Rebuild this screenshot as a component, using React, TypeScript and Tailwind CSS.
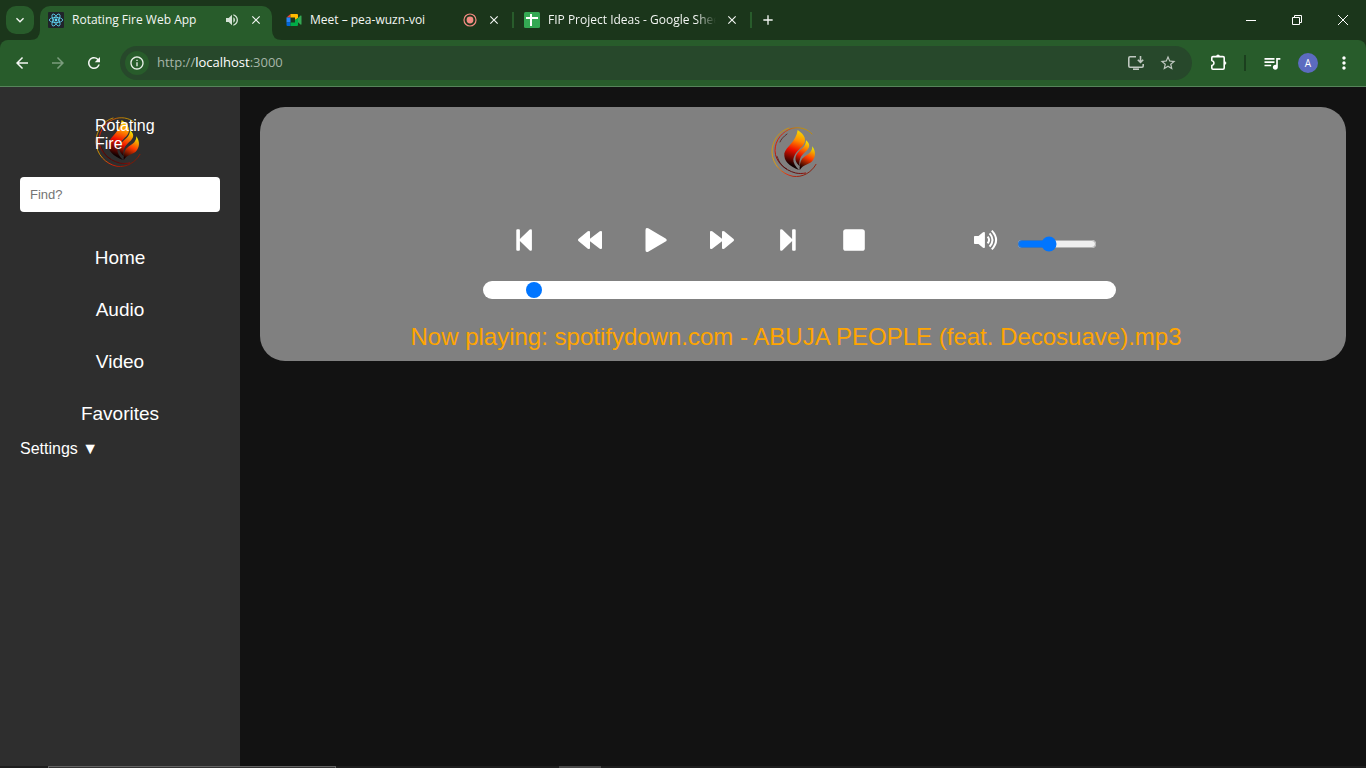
import { useState, type ReactNode } from 'react';
import {
  MdArrowBack,
  MdArrowForward,
  MdClose,
  MdAdd,
  MdExpandMore,
  MdInfoOutline,
  MdMoreVert,
  MdQueueMusic,
  MdRefresh,
  MdStarOutline,
  MdVolumeUp,
} from 'react-icons/md';

function FireLogo({ id }: { id: string }) {
  return (
    <svg viewBox="96 51 150 150" className="size-[50px] shrink-0" role="img" aria-label="Rotating Fire logo">
      <defs>
        <linearGradient id={`${id}-flame`} gradientUnits="userSpaceOnUse" x1="192" y1="66" x2="158" y2="168">
          <stop offset="0" stopColor="#f5d800" />
          <stop offset="0.28" stopColor="#ff8a00" />
          <stop offset="0.55" stopColor="#f01000" />
          <stop offset="0.98" stopColor="#100000" />
        </linearGradient>
        <linearGradient id={`${id}-middle`} gradientUnits="userSpaceOnUse" x1="208" y1="94" x2="176" y2="166">
          <stop offset="0" stopColor="#f2f000" />
          <stop offset="0.3" stopColor="#ff8000" />
          <stop offset="0.6" stopColor="#f01800" />
          <stop offset="1" stopColor="#100000" />
        </linearGradient>
        <linearGradient id={`${id}-side`} gradientUnits="userSpaceOnUse" x1="224" y1="112" x2="192" y2="176">
          <stop offset="0" stopColor="#e8f000" />
          <stop offset="0.5" stopColor="#ff3a00" />
          <stop offset="1" stopColor="#180000" />
        </linearGradient>
        <linearGradient id={`${id}-ring`} gradientUnits="userSpaceOnUse" x1="130" y1="52" x2="225" y2="190">
          <stop offset="0" stopColor="#d09000" />
          <stop offset="0.3" stopColor="#e8a000" />
          <stop offset="0.5" stopColor="#e8a000" />
          <stop offset="0.75" stopColor="#f02000" />
          <stop offset="1" stopColor="#601000" />
        </linearGradient>
        <linearGradient id={`${id}-inner`} gradientUnits="userSpaceOnUse" x1="215" y1="60" x2="150" y2="185">
          <stop offset="0" stopColor="#c0a000" />
          <stop offset="0.35" stopColor="#e02000" />
          <stop offset="0.75" stopColor="#e01000" />
          <stop offset="1" stopColor="#500000" />
        </linearGradient>
      </defs>
      <path d="M176 60C199 75 203 91 193 105C184 116 166 128 163 148C162 158 169 170 180 180C150 168 134 154 136 130C141 110 171 96 176 60Z" fill={`url(#${id}-flame)`} />
      <path d="M201 91C213 101 214 112 203 122C191 132 178 143 182 169C169 158 165 145 175 130C184 117 201 111 201 91Z" fill={`url(#${id}-middle)`} />
      <path d="M220 109C231 124 231 142 218 155C207 165 193 162 182 181C182 158 185 148 198 139C211 132 220 123 220 109Z" fill={`url(#${id}-side)`} />
      <g fill="none" strokeLinecap="round">
        <path d="M150 54C120 63 99 92 99 126C100 163 128 192 162 199C190 203 217 188 231 163" stroke={`url(#${id}-ring)`} strokeWidth="2.6" />
        <path d="M219 72C205 56 182 50 160 55C130 63 108 91 108 122C109 154 135 180 170 189C180 191 190 191 200 189" stroke={`url(#${id}-inner)`} strokeWidth="2.8" />
        <path d="M144 72C133 80 126 88 123 96M115 140C120 158 130 169 143 177" stroke="#4a0a08" strokeWidth="2" />
      </g>
    </svg>
  );
}

function ReactFavicon() {
  return (
    <svg viewBox="0 0 16 16" className="size-4 shrink-0" aria-hidden="true">
      <rect width="16" height="16" rx="1" fill="#20232a" />
      <g fill="none" stroke="#61dafb" strokeWidth="0.8">
        <ellipse cx="8" cy="8" rx="6.7" ry="2.6" />
        <ellipse cx="8" cy="8" rx="6.7" ry="2.6" transform="rotate(60 8 8)" />
        <ellipse cx="8" cy="8" rx="6.7" ry="2.6" transform="rotate(120 8 8)" />
      </g>
      <circle cx="8" cy="8" r="1.4" fill="#61dafb" />
    </svg>
  );
}

function MeetFavicon() {
  return (
    <svg viewBox="0 0 16 16" className="size-4 shrink-0" aria-hidden="true">
      <path d="M0.5 5.5L4.5 2V5.5Z" fill="#ea4335" />
      <path d="M0.5 5.5H4.5V10.5H0.5Z" fill="#2684fc" />
      <path d="M0.5 10.5H4.5V14H1.5Q0.5 14 0.5 13Z" fill="#0066da" />
      <path d="M4.5 2H11Q12 2 12 3V6L9 8V5.5H4.5Z" fill="#ffba00" />
      <path d="M4.5 10.5H9V8L12 6V13Q12 14 11 14H4.5Z" fill="#00ac47" />
      <path d="M12 6L14.5 3.6Q15.5 3 15.5 4V12Q15.5 13 14.5 12.4L12 10.3Z" fill="#34a853" />
    </svg>
  );
}

function SheetsFavicon() {
  return (
    <svg viewBox="0 0 16 16" className="size-4 shrink-0" aria-hidden="true">
      <rect width="16" height="16" rx="1.5" fill="#34a853" />
      <path d="M2 6H14M7 2V14" stroke="#fff" strokeWidth="2" />
    </svg>
  );
}

function TabFoot({ flip }: { flip?: boolean }) {
  return (
    <svg
      viewBox="0 0 10 10"
      className={flip ? 'absolute bottom-0 left-full size-2.5 -scale-x-100' : 'absolute right-full bottom-0 size-2.5'}
      aria-hidden="true"
    >
      <path d="M10 0V10H0Q10 10 10 0Z" fill="#285c2b" />
    </svg>
  );
}

type TabProps = { title: string; favicon: ReactNode; status?: ReactNode; active?: boolean; faded?: boolean };

function BrowserTab({ title, favicon, status, active, faded }: TabProps) {
  return (
    <div
      className={`relative flex w-58 min-w-0 items-center gap-2 px-2 pb-1.5 ${active ? 'rounded-t-[10px] bg-[#285c2b]' : ''}`}
    >
      {active && <TabFoot />}
      {active && <TabFoot flip />}
      {favicon}
      <a
        href="#tab"
        className={`min-w-0 flex-1 overflow-hidden text-xs whitespace-nowrap ${faded ? '[mask-image:linear-gradient(to_right,black_88%,transparent)]' : ''}`}
      >
        {title}
      </a>
      {status}
      <button type="button" aria-label={`Close ${title}`} className="flex size-4 shrink-0 items-center justify-center">
        <MdClose className="size-3.5" />
      </button>
    </div>
  );
}

function BrowserChrome() {
  return (
    <header className="shrink-0 bg-[#1b361b] font-['Open_Sans','Noto_Sans',sans-serif] text-[#f3f6f3]">
      <div className="flex h-10 items-stretch pt-1.5">
        <button
          type="button"
          aria-label="Search tabs"
          className="mr-1.5 ml-1.5 flex size-7 items-center justify-center rounded-[10px] bg-[#285c2b]"
        >
          <MdExpandMore className="size-4" />
        </button>
        <nav aria-label="Browser tabs" className="flex">
          <BrowserTab active title="Rotating Fire Web App" favicon={<ReactFavicon />} status={<MdVolumeUp className="size-4 shrink-0 text-[#d5e2d5]" />} />
          <span className="w-1.5" />
          <BrowserTab
            title="Meet – pea-wuzn-voi"
            favicon={<MeetFavicon />}
            status={
              <svg viewBox="0 0 16 16" className="size-4 shrink-0" role="img" aria-label="Recording">
                <circle cx="8" cy="8" r="6" fill="none" stroke="#f28b82" strokeWidth="1.2" />
                <circle cx="8" cy="8" r="3.4" fill="#f28b82" />
              </svg>
            }
          />
          <span className="mx-0.5 mt-1.5 h-4 w-0.5 bg-[#285c2b]" />
          <BrowserTab faded title="FIP Project Ideas - Google Sheets" favicon={<SheetsFavicon />} />
          <span className="mx-0.5 mt-1.5 h-4 w-0.5 bg-[#285c2b]" />
        </nav>
        <button type="button" aria-label="New tab" className="flex size-7 items-center justify-center">
          <MdAdd className="size-4" />
        </button>
        <div className="ml-auto flex h-7 text-white">
          <button type="button" aria-label="Minimize" className="flex w-[46px] items-center justify-center">
            <svg viewBox="0 0 10 10" className="size-2.5"><path d="M0 5.5H10" stroke="currentColor" /></svg>
          </button>
          <button type="button" aria-label="Restore" className="flex w-[46px] items-center justify-center">
            <svg viewBox="0 0 10 10" className="size-2.5" fill="none" stroke="currentColor">
              <path d="M0.5 2.5H7.5V9.5H0.5ZM2.5 2.5V0.5H9.5V7.5H7.5" />
            </svg>
          </button>
          <button type="button" aria-label="Close window" className="flex w-[46px] items-center justify-center">
            <svg viewBox="0 0 10 10" className="size-2.5"><path d="M0 0L10 10M10 0L0 10" stroke="currentColor" /></svg>
          </button>
        </div>
      </div>
      <div className="flex h-[47px] items-center rounded-t-lg border-b border-[#56845a] bg-[#285c2b] px-3">
        <div className="mr-4 flex gap-4">
          <button type="button" aria-label="Back" className="flex size-5 items-center justify-center"><MdArrowBack className="size-[18px]" /></button>
          <button type="button" aria-label="Forward" className="flex size-5 items-center justify-center text-[#7b9c7d]"><MdArrowForward className="size-[18px]" /></button>
          <button type="button" aria-label="Reload" className="flex size-5 items-center justify-center"><MdRefresh className="size-[18px]" /></button>
        </div>
        <div className="flex h-[34px] min-w-0 flex-1 items-center rounded-full bg-[#27482b] pr-4 pl-[5px] text-[#bfc8c0]">
          <button type="button" aria-label="Site information" className="mr-2 flex size-6 items-center justify-center rounded-full bg-[#285c2b] text-[#e8efe8]">
            <MdInfoOutline className="size-4" />
          </button>
          <a href="#address" className="flex-1 text-[13px] text-[#a6b5a8]">
            http://<span className="text-white">localhost</span>:3000
          </a>
          <button type="button" aria-label="Install app" className="mr-4 flex size-4 items-center justify-center">
            <svg viewBox="0 0 16 16" className="size-4" fill="none" stroke="currentColor" strokeWidth="1.6">
              <path d="M8 1.8H2Q0.8 1.8 0.8 3V11Q0.8 12.2 2 12.2H14Q15.2 12.2 15.2 11V9" />
              <path d="M5 14.2H11" />
              <path d="M12.5 1V7M9.8 4.7L12.5 7.4L15.2 4.7" />
            </svg>
          </button>
          <button type="button" aria-label="Bookmark" className="flex size-4 items-center justify-center">
            <MdStarOutline className="size-[18px] shrink-0" />
          </button>
        </div>
        <div className="flex items-center pl-[17px]">
          <button type="button" aria-label="Extensions" className="mr-[17px] flex size-[18px] items-center justify-center text-white">
            <svg viewBox="0 0 18 18" className="size-[18px]" fill="none" stroke="currentColor" strokeWidth="1.6" strokeLinejoin="round">
              <path d="M4 2.6H14Q15.2 2.6 15.2 3.8V14Q15.2 15.2 14 15.2H4Q2.8 15.2 2.8 14V11.6Q5 11 5 9Q5 7 2.8 6.4V3.8Q2.8 2.6 4 2.6Z" />
              <path d="M7.4 2.3A1.6 1.6 0 0 1 10.6 2.3ZM15.5 7.4A1.6 1.6 0 0 1 15.5 10.6Z" fill="currentColor" strokeWidth="0.4" />
            </svg>
          </button>
          <span className="mr-4 h-4 w-0.5 bg-[#1b3f1e]" />
          <button type="button" aria-label="Media controls" className="mr-4 text-white"><MdQueueMusic className="size-5" /></button>
          <button type="button" aria-label="Profile" className="mr-4 flex size-5 items-center justify-center rounded-full bg-[#5c6bc0] text-[10px] text-white">A</button>
          <button type="button" aria-label="Menu" className="text-white"><MdMoreVert className="size-5" /></button>
        </div>
      </div>
    </header>
  );
}

function Sidebar() {
  return (
    <aside className="flex w-60 shrink-0 flex-col bg-[#2e2e2e] px-5 pt-[30px] text-white">
      <div className="relative mx-auto size-[50px]">
        <FireLogo id="sidebar" />
        <span className="absolute top-0 left-0 w-16 text-base leading-[18px]">Rotating Fire</span>
      </div>
      <input
        type="search"
        aria-label="Find"
        placeholder="Find?"
        className="mt-2.5 h-[35px] w-full rounded-sm bg-white px-2.5 text-[13px] text-black placeholder:text-[#757575]"
      />
      <nav aria-label="Library" className="mt-5 flex flex-col items-center text-[19px]">
        {['Home', 'Audio', 'Video', 'Favorites'].map((label) => (
          <a key={label} href={`#${label.toLowerCase()}`} className="flex h-13 items-center">
            {label}
          </a>
        ))}
      </nav>
      <button type="button" className="self-start text-base leading-[18px]">Settings ▼</button>
    </aside>
  );
}

const controls = [
  { label: 'Previous', path: 'M7.3 5.3Q7.3 4.3 8.3 4.3H9.9Q10.9 4.3 10.9 5.3V14L20.7 4.6Q22.9 3.4 22.9 5.6V24.4Q22.9 26.6 20.7 25.4L10.9 16V24.7Q10.9 25.7 9.9 25.7H8.3Q7.3 25.7 7.3 24.7Z' },
  { label: 'Rewind', path: 'M3.4 14Q2.5 15 3.4 16L12.8 23.7Q15 24.8 15 22.8V16.2L24.8 23.7Q27 24.8 27 22.8V7.2Q27 5.2 24.8 6.3L15 13.8V7.2Q15 5.2 12.8 6.3Z' },
  { label: 'Play', path: 'M4.5 5Q4.5 2 7.2 3.3L24.6 13.4Q26.8 15 24.6 16.6L7.2 26.7Q4.5 28 4.5 25Z' },
  { label: 'Fast forward', path: 'M26.6 14Q27.5 15 26.6 16L17.2 23.7Q15 24.8 15 22.8V16.2L5.2 23.7Q3 24.8 3 22.8V7.2Q3 5.2 5.2 6.3L15 13.8V7.2Q15 5.2 17.2 6.3Z' },
  { label: 'Next', path: 'M22.7 5.3Q22.7 4.3 21.7 4.3H20.1Q19.1 4.3 19.1 5.3V14L9.3 4.6Q7.1 3.4 7.1 5.6V24.4Q7.1 26.6 9.3 25.4L19.1 16V24.7Q19.1 25.7 20.1 25.7H21.7Q22.7 25.7 22.7 24.7Z' },
  { label: 'Stop', path: 'M6.8 4.2H23.2Q25.8 4.2 25.8 6.8V23.2Q25.8 25.8 23.2 25.8H6.8Q4.2 25.8 4.2 23.2V6.8Q4.2 4.2 6.8 4.2Z' },
];

function Player() {
  const [position, setPosition] = useState(7);
  const [volume, setVolume] = useState(38);
  return (
    <section aria-label="Player" className="flex flex-col items-center rounded-[25px] bg-[#808080] pt-5 pr-3.5 pb-2.5">
      <FireLogo id="player" />
      <div className="mt-12 ml-1.5 flex h-[30px] w-full max-w-[633px] items-center pl-2 text-white">
        {controls.map(({ label, path }) => (
          <button key={label} type="button" aria-label={label} className="flex w-[66px] justify-center">
            <svg viewBox="0 0 30 30" className="size-[30px]" fill="currentColor"><path d={path} /></svg>
          </button>
        ))}
        <button type="button" aria-label="Mute" className="ml-[68px] flex w-[62px] justify-center">
          <svg viewBox="0 0 30 30" className="size-[30px]" fill="none" stroke="currentColor" strokeWidth="2">
            <path d="M3 11.7Q3 10.9 3.8 10.9H7.5L12 7.3Q13.9 6.2 13.9 8V22Q13.9 23.8 12 22.7L7.5 19.1H3.8Q3 19.1 3 18.3Z" fill="currentColor" stroke="none" />
            <path d="M16.6 11.6Q19.6 15 16.6 18.4M18.6 8.4Q24.4 15 18.6 21.6M20.8 5.6Q29.4 15 20.8 24.4" />
          </svg>
        </button>
        <input
          type="range"
          aria-label="Volume"
          value={volume}
          onChange={(e) => setVolume(Number(e.target.value))}
          className="mt-2 w-20 accent-[#0075ff]"
        />
      </div>
      <input
        type="range"
        aria-label="Playback position"
        value={position}
        onChange={(e) => setPosition(Number(e.target.value))}
        className="mt-[26px] ml-1.5 h-[18px] w-full max-w-[633px] appearance-none rounded-full bg-white [&::-webkit-slider-thumb]:size-4 [&::-webkit-slider-thumb]:appearance-none [&::-webkit-slider-thumb]:rounded-full [&::-webkit-slider-thumb]:bg-[#0075ff]"
      />
      <p className="mt-6 text-2xl leading-7 text-[#ffa500]">
        Now playing: spotifydown.com - ABUJA PEOPLE (feat. Decosuave).mp3
      </p>
    </section>
  );
}

export default function App() {
  return (
    <div className="flex min-h-screen flex-col bg-[#121212] font-['Liberation_Sans',Arial,sans-serif]">
      <BrowserChrome />
      <div className="flex flex-1">
        <Sidebar />
        <main className="min-w-0 flex-1 p-5">
          <Player />
        </main>
      </div>
      <footer className="flex h-0.5 shrink-0 bg-[#1e1e1e]" aria-hidden="true">
        <span className="ml-12 w-72 border border-b-0 border-[#636363] bg-[#333333]" />
        <span className="ml-[223px] w-[42px] bg-[#484848]" />
      </footer>
    </div>
  );
}
